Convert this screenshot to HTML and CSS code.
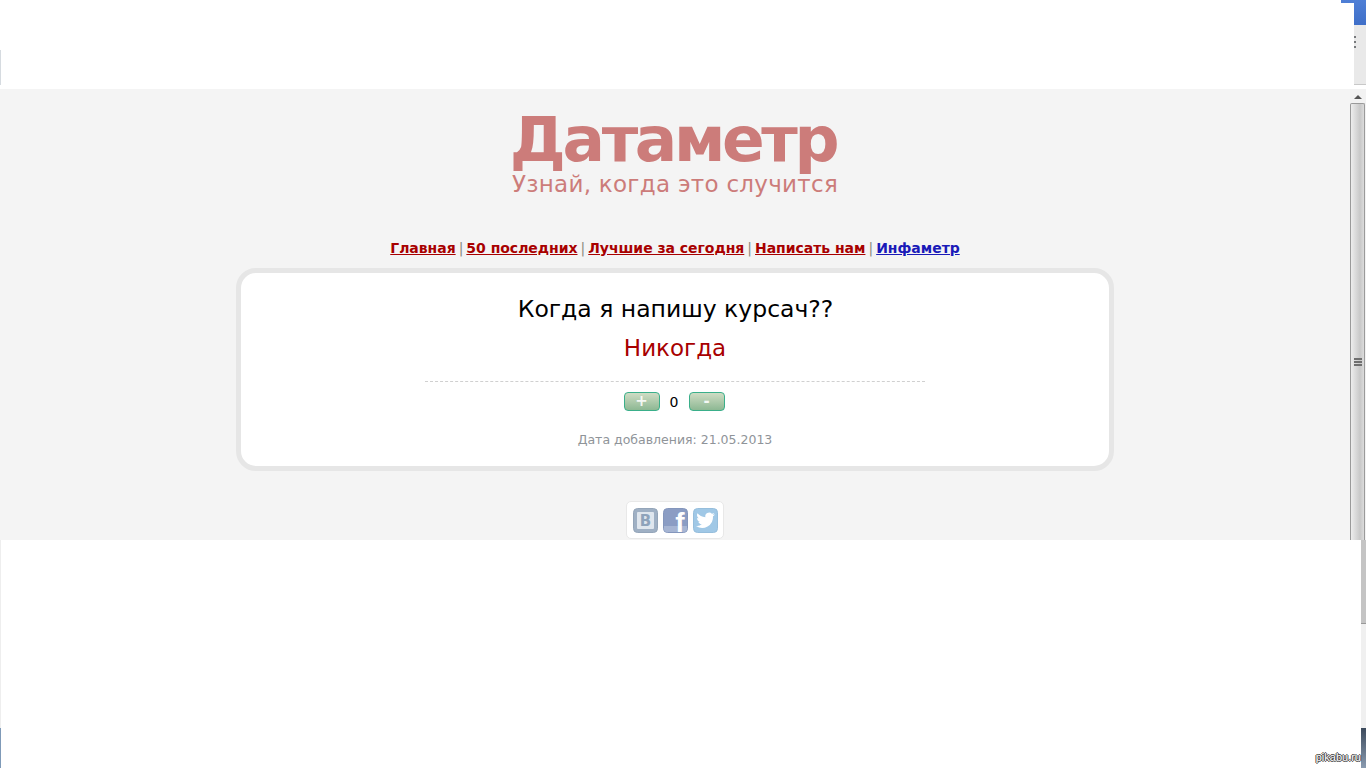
FILE: index.html
```html
<!DOCTYPE html>
<html lang="ru">
<head>
<meta charset="utf-8">
<title>Датаметр</title>
<link rel="stylesheet" href="styles.css">
</head>
<body>
<div class="shot">
  <div class="band band-top">
    <div class="blank blank-top"><span class="edge-tick"></span></div>
    <div class="strip-top">
      <div class="win-btn"></div>
      <div class="strip-panel"><div class="dots"><i></i><i></i><i></i></div></div>
    </div>
  </div>
  <div class="band band-mid">
    <main class="page">
      <header class="logo">
        <h1>Датаметр</h1>
        <p>Узнай, когда это случится</p>
      </header>
      <nav class="nav">
        <a href="#">Главная</a><span class="sep">|</span><a href="#">50 последних</a><span class="sep">|</span><a href="#">Лучшие за сегодня</a><span class="sep">|</span><a href="#">Написать нам</a><span class="sep">|</span><a href="#" class="blue">Инфаметр</a>
      </nav>
      <section class="card">
        <h2>Когда я напишу курсач??</h2>
        <p class="answer">Никогда</p>
        <hr class="rule">
        <div class="vote">
          <button class="vbtn">+</button>
          <span class="count">0</span>
          <button class="vbtn">-</button>
        </div>
        <p class="date">Дата добавления: 21.05.2013</p>
      </section>
      <div class="social">
        <svg class="ico" viewBox="0 0 25 25" width="25" height="25">
          <rect x="0.5" y="0.5" width="24" height="24" rx="4" fill="#9fb0c4" stroke="#94a5b9"/>
          <rect x="4" y="4" width="17" height="17" rx="1" fill="#dfe6ee"/>
          <text x="12.5" y="18" text-anchor="middle" class="ico-b">B</text>
        </svg>
        <svg class="ico" viewBox="0 0 25 25" width="25" height="25">
          <rect x="0.5" y="0.5" width="24" height="24" rx="4" fill="#8b9dc4" stroke="#8496bc"/>
          <path d="M1 18h23v3a3 3 0 0 1-3 3H4a3 3 0 0 1-3-3z" fill="#a6b5d3"/>
          <text x="17" y="24" text-anchor="middle" class="ico-f">f</text>
        </svg>
        <svg class="ico" viewBox="0 0 25 25" width="25" height="25">
          <rect x="0.5" y="0.5" width="24" height="24" rx="4" fill="#a0c8e6" stroke="#96bedc"/>
          <path d="M22 6.200c-.8.4-1.500.6-2.300.7.800-.5 1.300-1.200 1.600-2-.8.400-1.600.8-2.400.9a3.800 3.800 0 0 0-6.500 3.500C9.100 9.100 6.300 7.600 4.500 5.300c-1 1.700-.4 3.900 1.200 5-.6 0-1.200-.2-1.700-.4 0 1.800 1.300 3.400 3 3.800-.5.100-1.100.1-1.700 0 .5 1.500 1.900 2.600 3.600 2.600A7.600 7.600 0 0 1 3 17.900 10.800 10.800 0 0 0 20 8.300c.7-.5 1.400-1.300 2-2.100z" fill="#fff"/>
        </svg>
      </div>
    </main>
    <aside class="scrollbar">
      <div class="arrow"></div>
      <div class="thumb"><div class="grip"><i></i><i></i><i></i></div></div>
    </aside>
  </div>
  <div class="band band-bot">
    <div class="blank blank-bot">
      <div class="bot-edge"></div>
      <span class="mark">pikabu.ru</span>
    </div>
    <div class="strip-bot">
      <div class="thumb-tail"></div>
      <div class="track-tail"></div>
      <div class="task-tail"></div>
    </div>
  </div>
</div>
</body>
</html>
```
FILE: styles.css
```css
* { box-sizing: border-box; }
html, body { margin: 0; padding: 0; height: 100%; overflow: hidden; background: #fff; }
body { font-family: "DejaVu Sans", Verdana, sans-serif; }
.shot { width: 1366px; height: 768px; display: flex; flex-direction: column; }
.band { display: flex; }
.band-top { height: 89px; }
.band-mid { height: 451px; }
.band-bot { height: 228px; }

.blank { background: #fff; }
.blank-top { width: 1341px; padding-top: 50px; flex: none; }
.edge-tick { display: block; width: 1px; height: 35px; background: #d6dbe0; }
.strip-top { width: 25px; flex: none; display: flex; flex-direction: column; background: #fff; }
.win-btn { height: 25px; flex: none; background: linear-gradient(180deg, #4f7fd6, #3f6fc8); width: 25px; clip-path: polygon(0 0, 100% 0, 100% 100%, 52% 100%, 52% 3px, 0 3px); }
.strip-panel { margin-left: 13px; height: 60px; flex: none; background: #e9e9e9; border-bottom: 1px solid #c8c8c8; }
.dots { display: flex; flex-direction: column; gap: 3px; padding-top: 11px; }
.dots i { display: block; width: 2px; height: 2px; background: #77797c; }

.page { width: 1350px; flex: none; background: #f4f4f4; display: flex; flex-direction: column; align-items: center; overflow: hidden; }
.logo { margin-top: 13px; height: 125px; color: #cc7c7a; text-align: center; }
.logo h1 { margin: 7px 4px 0 0; font-size: 63px; letter-spacing: -3.400px; line-height: 62px; font-weight: 700; }
.logo p { margin: 0; font-size: 23px; letter-spacing: 0.280px; line-height: 26px; }
.nav { margin-top: 11px; height: 30px; font-size: 14px; line-height: 20px; font-weight: 700; white-space: nowrap; }
.nav a { color: #a80000; letter-spacing: -0.030px; }
.nav a.blue { color: #1a1ab8; }
.sep { font-weight: 400; color: #8a8a80; margin: 0 3px; }
.card { width: 878px; height: 203px; flex: none; background: #fff; border: 5px solid #e6e6e6; border-radius: 20px; display: flex; flex-direction: column; align-items: center; }
.card h2 { margin: 21px 0 0 1px; font-size: 23.500px; line-height: 30px; font-weight: 400; color: #000; }
.answer { margin: 9px 0 0; font-size: 23px; line-height: 30px; color: #a80000; }
.rule { width: 500px; margin: 18px 0 0; border: 0; border-top: 1px dashed #d0d0d0; height: 0; flex: none; }
.vote { margin: 10px 2px 0 0; display: flex; align-items: center; height: 19px; }
.vbtn { width: 36px; height: 19px; padding: 0; border: 1px solid #3aaf8a; border-radius: 4px; background: linear-gradient(180deg, #cfdcc4, #8db893); color: rgba(255, 255, 255, 0.88); font-family: "DejaVu Sans", sans-serif; font-size: 15px; font-weight: 700; line-height: 15px; }
.count { width: 29px; text-align: center; font-size: 14px; color: #000; }
.date { margin: 20px 0 0; font-size: 12.500px; line-height: 18px; color: #8f9499; }
.social { margin-top: 30px; width: 98px; height: 38px; flex: none; background: #fff; border: 1px solid #e8e8e8; border-radius: 5px; display: flex; justify-content: center; align-items: center; gap: 5px; }
.ico { display: block; flex: none; }
.ico-b { font-family: "DejaVu Sans", sans-serif; font-weight: 700; font-size: 15px; fill: #8ea3bb; }
.ico-f { font-family: "Liberation Sans", sans-serif; font-weight: 700; font-size: 28px; fill: #fff; }

.scrollbar { width: 16px; flex: none; background: #f2f2f2; display: flex; flex-direction: column; align-items: center; }
.arrow { width: 0; height: 0; margin: 6px 0 4px; flex: none; border-left: 4px solid transparent; border-right: 4px solid transparent; border-bottom: 4px solid #555; }
.thumb { width: 15px; flex: 1; align-self: flex-start; border: 1px solid #9a9a9a; border-bottom: 0; border-radius: 2px 2px 0 0; background: linear-gradient(90deg, #ededed, #c8c8c8 70%, #dcdcdc); display: flex; flex-direction: column; align-items: center; padding-top: 254px; }
.grip { width: 8px; display: flex; flex-direction: column; gap: 1px; }
.grip i { display: block; height: 2px; background: #6f6f6f; }

.blank-bot { width: 1361px; flex: none; display: flex; align-items: flex-end; justify-content: flex-end; padding-bottom: 4px; position: relative; }
.bot-edge { position: absolute; left: 0; top: 0; width: 1px; height: 228px; background: linear-gradient(180deg, #eee 188px, #7f9ab8 188px); }
.mark { font-family: "Liberation Sans", sans-serif; font-size: 11px; line-height: 14px; color: #fff; text-shadow: 1px 0 0 #444, -1px 0 0 #444, 0 1px 0 #444, 0 -1px 0 #444; }
.strip-bot { width: 5px; flex: none; display: flex; flex-direction: column; }
.thumb-tail { height: 84px; background: #c4c4c4; border-bottom: 1px solid #999; }
.track-tail { height: 104px; background: #f0f0f0; }
.task-tail { flex: 1; background: linear-gradient(180deg, #3c4a5c, #8a9bb0); }
```
